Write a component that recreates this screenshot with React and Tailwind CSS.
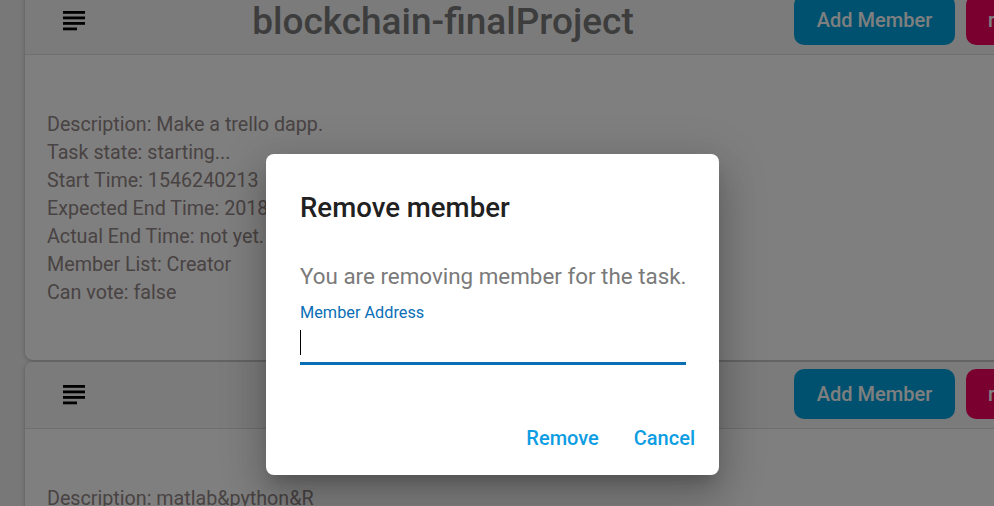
import React from "react";

function SubjectIcon() {
  return (
    <svg width="22" height="20" viewBox="0 0 22 20" className="block">
      <rect x="0" y="0" width="22" height="2.8" fill="#000" />
      <rect x="0" y="5.5" width="22" height="2.8" fill="#000" />
      <rect x="0" y="11" width="22" height="2.8" fill="#000" />
      <rect x="0" y="16.5" width="14" height="2.8" fill="#000" />
    </svg>
  );
}

function CardHeader({ title }) {
  return (
    <div className="flex items-center h-[67px] bg-[#f6f6f6] border-b border-[#dcdcdc] rounded-t-[8px]">
      <div className="w-[67px] shrink-0 pl-[38px] flex items-center">
        <SubjectIcon />
      </div>
      <div className="w-[702px] shrink-0 text-center text-[37px] leading-[40px] font-medium text-[#7a7a7a] pt-[1px] whitespace-nowrap">
        {title}
      </div>
      <div className="flex items-center gap-[11px] pb-[2px]">
        <button className="h-[50px] w-[161px] rounded-[10px] bg-[#00a2de] text-white text-[20px] font-medium">
          Add Member
        </button>
        <button className="h-[50px] w-[200px] rounded-[10px] bg-[#f50060] text-white text-[20px] font-medium text-left pl-[22px]">
          remove
        </button>
      </div>
    </div>
  );
}

function Card({ title, lines }) {
  return (
    <div className="w-[1150px] bg-white rounded-[8px] shadow-[0_1px_4px_rgba(0,0,0,0.25)]">
      <CardHeader title={title} />
      <div className="pl-[22px] pt-[56px] pb-[53px] text-[19.7px] leading-[28px] text-[#928686]">
        {lines.map((l, i) => (
          <div key={i}>{l}</div>
        ))}
      </div>
    </div>
  );
}

export default function App() {
  return (
    <div
      className="relative w-[994px] h-[506px] overflow-hidden bg-[#f0f0f0]"
      style={{ fontFamily: "Roboto, 'Liberation Sans', sans-serif" }}
    >
      <div className="pl-[25px] -mt-[12px] flex flex-col gap-[2px]">
        <Card
          title="blockchain-finalProject"
          lines={[
            "Description: Make a trello dapp.",
            "Task state: starting...",
            "Start Time: 1546240213",
            "Expected End Time: 2018",
            "Actual End Time: not yet.",
            "Member List: Creator",
            "Can vote: false",
          ]}
        />
        <Card
          title=""
          lines={["Description: matlab&python&R", "Task state: starting..."]}
        />
      </div>

      <div className="absolute inset-0 bg-black/50" />

      <div className="absolute left-[266px] top-[154px] w-[453px] h-[321px] bg-white rounded-[8px] shadow-[0_11px_15px_-7px_rgba(0,0,0,0.2),0_24px_38px_3px_rgba(0,0,0,0.14),0_9px_46px_8px_rgba(0,0,0,0.12)] flex flex-col">
        <div className="pl-[34px] pr-[33px] pt-[36px]">
          <div className="text-[27.6px] leading-[36px] font-medium text-[#212121] whitespace-nowrap">
            Remove member
          </div>
          <div className="mt-[35px] text-[22.4px] leading-[30px] text-[#7a7a7a] whitespace-nowrap">
            You are removing member for the task.
          </div>
          <div className="mt-[12px] text-[16.3px] leading-[20px] text-[#0a6fb8] whitespace-nowrap">
            Member Address
          </div>
          <div className="h-[42px] border-b-[3px] border-[#0a6eb4] relative">
            <div className="absolute left-0 top-[7px] w-[1px] h-[25px] bg-black" />
          </div>
        </div>
        <div className="mt-[61px] flex justify-end gap-[35px] pr-[24px] text-[20px] leading-[24px] font-medium text-[#0d9de3]">
          <span>Remove</span>
          <span>Cancel</span>
        </div>
      </div>
    </div>
  );
}
